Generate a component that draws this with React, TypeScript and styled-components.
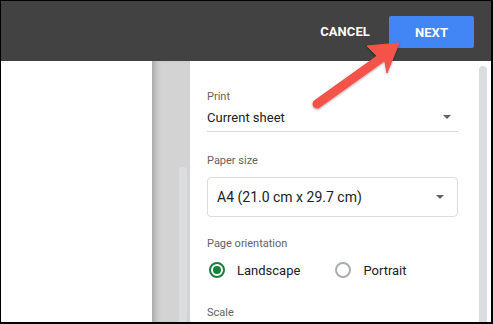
import styled, { createGlobalStyle } from "styled-components"

const GlobalStyle = createGlobalStyle`
  html, body {
    margin: 0;
    padding: 0;
    background: #000;
  }
  * {
    box-sizing: border-box;
  }
`

const Frame = styled.div`
  position: relative;
  width: 493px;
  height: 324px;
  border-style: solid;
  border-color: #000;
  border-width: 1px 2px 2px 1px;
  display: flex;
  flex-direction: column;
  overflow: hidden;
  font-family: Roboto, "Liberation Sans", Arial, sans-serif;
  background: #fff;
`

const TopBar = styled.div`
  height: 60px;
  flex: none;
  background: #424242;
  display: flex;
  align-items: center;
  justify-content: flex-end;
  padding-right: 17px;
  gap: 19px;
`

const TextButton = styled.button`
  background: none;
  border: none;
  padding: 0;
  color: #fff;
  font-family: inherit;
  font-weight: 700;
  font-size: 13px;
  letter-spacing: 0.1px;
  text-transform: uppercase;
`

const PrimaryButton = styled.button`
  width: 85px;
  height: 32px;
  margin-top: 2px;
  border: none;
  border-radius: 2px;
  background: #4285f4;
  color: #fff;
  font-family: inherit;
  font-weight: 700;
  font-size: 13px;
  letter-spacing: 0.1px;
  text-transform: uppercase;
`

const Body = styled.div`
  flex: 1;
  display: flex;
  min-height: 0;
`

const Preview = styled.div`
  width: 151px;
  flex: none;
  background: #fff;
`

const Gutter = styled.div`
  width: 38px;
  flex: none;
  background: #d3d3d3;
  box-shadow: inset 7px 0 6px -4px rgba(0, 0, 0, 0.22);
  padding: 106px 0 0 27px;
`

const ScrollThumb = styled.div`
  width: 8px;
  height: 100%;
  border-radius: 4px 4px 0 0;
  background: #dcdde0;
`

const Panel = styled.div`
  flex: 1;
  padding: 28px 21px 0 17px;
  display: flex;
  flex-direction: column;
  min-width: 0;
`

const RightRail = styled.div`
  width: 12px;
  flex: none;
  padding-top: 5px;
`

const Label = styled.div<{ $gap: number }>`
  margin-top: ${(p) => p.$gap}px;
  font-size: 11px;
  line-height: 16px;
  color: #5f6368;
`

const UnderlineSelect = styled.div`
  margin-top: 2px;
  height: 25px;
  padding-bottom: 4px;
  border-bottom: 1px solid #dadce0;
  display: flex;
  align-items: center;
  justify-content: space-between;
  padding-right: 7px;
  font-size: 13px;
  color: #202124;
`

const BoxSelect = styled.div`
  margin-top: 8px;
  height: 40px;
  border: 1px solid #dadce0;
  border-radius: 4px;
  display: flex;
  align-items: center;
  justify-content: space-between;
  padding: 0 13px 0 9px;
  font-size: 14px;
  color: #202124;
`

const Caret = styled.span`
  width: 0;
  height: 0;
  border-left: 4.5px solid transparent;
  border-right: 4.5px solid transparent;
  border-top: 4.5px solid #5f6368;
`

const RadioRow = styled.div`
  margin-top: 2px;
  height: 32px;
  display: flex;
  align-items: center;
  padding-left: 2px;
  gap: 35px;
`

const RadioOption = styled.label`
  display: flex;
  align-items: center;
  gap: 12px;
  font-size: 13px;
  color: #202124;
`

const RadioRing = styled.span<{ $checked?: boolean }>`
  width: 16px;
  height: 16px;
  border-radius: 50%;
  border: 2px solid ${(p) => (p.$checked ? "#188038" : "#a9acb0")};
  display: flex;
  align-items: center;
  justify-content: center;
  &::after {
    content: "";
    width: 8px;
    height: 8px;
    border-radius: 50%;
    background: ${(p) => (p.$checked ? "#188038" : "transparent")};
  }
`

const Callout = styled.svg`
  position: absolute;
  left: -1px;
  top: -1px;
  pointer-events: none;
`

function Radio({ label, checked }: { label: string; checked?: boolean }) {
  return (
    <RadioOption>
      <RadioRing $checked={checked} />
      {label}
    </RadioOption>
  )
}

export default function App() {
  return (
    <>
      <GlobalStyle />
      <Frame>
        <TopBar>
          <TextButton>Cancel</TextButton>
          <PrimaryButton>Next</PrimaryButton>
        </TopBar>
        <Body>
          <Preview />
          <Gutter>
            <ScrollThumb />
          </Gutter>
          <Panel>
            <Label $gap={0}>Print</Label>
            <UnderlineSelect>
              Current sheet
              <Caret />
            </UnderlineSelect>
            <Label $gap={21}>Paper size</Label>
            <BoxSelect>
              A4 (21.0 cm x 29.7 cm)
              <Caret />
            </BoxSelect>
            <Label $gap={19}>Page orientation</Label>
            <RadioRow>
              <Radio label="Landscape" checked />
              <Radio label="Portrait" />
            </RadioRow>
            <Label $gap={19}>Scale</Label>
          </Panel>
          <RightRail>
            <ScrollThumb />
          </RightRail>
        </Body>
        <Callout width="493" height="324" viewBox="0 0 493 324">
          <defs>
            <filter id="shade" x="-20%" y="-20%" width="140%" height="140%">
              <feDropShadow dx="0" dy="1" stdDeviation="1" floodColor="#000" floodOpacity="0.35" />
            </filter>
          </defs>
          <g fill="#f4524a" stroke="#f4524a" filter="url(#shade)">
            <line x1="317" y1="104" x2="380" y2="59" strokeWidth="9" strokeLinecap="round" />
            <polygon points="399,43 367,46 377,56 385,62 387,73" strokeWidth="1" strokeLinejoin="round" />
          </g>
        </Callout>
      </Frame>
    </>
  )
}
